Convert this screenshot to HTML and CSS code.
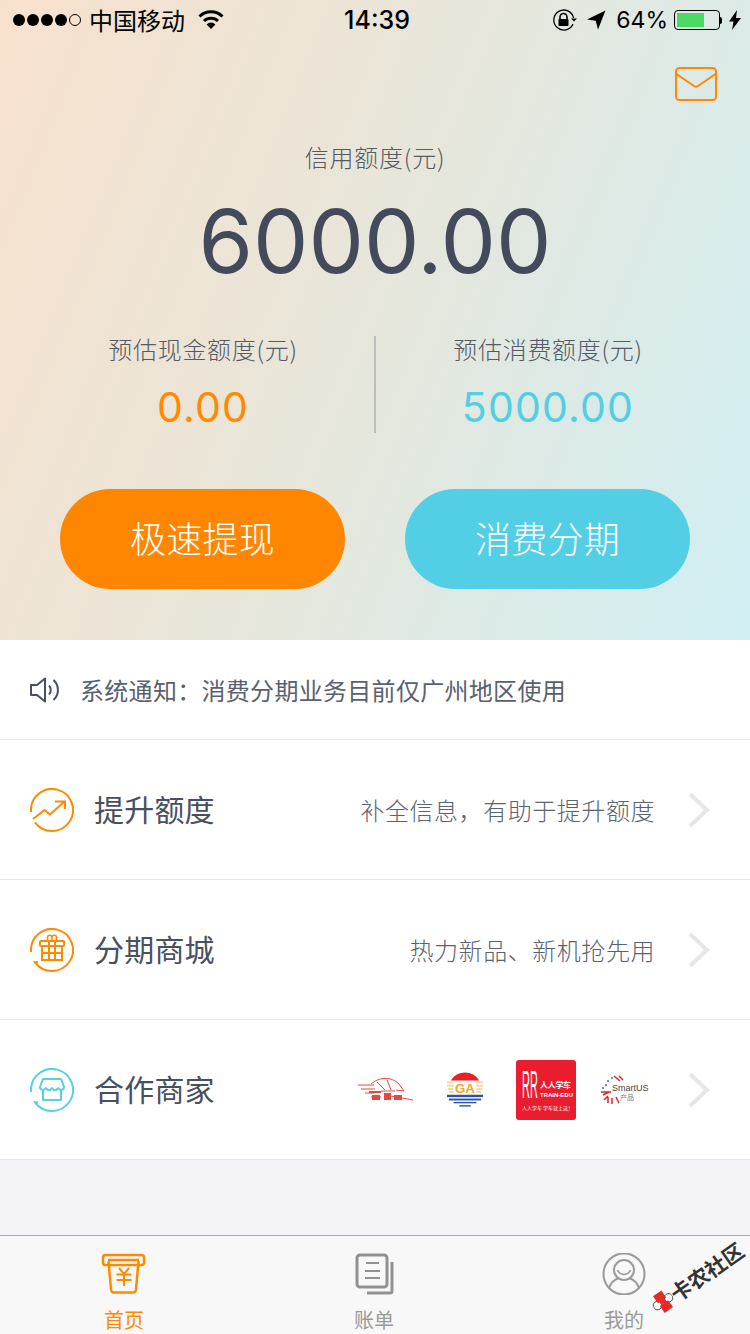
FILE: index.html
```html
<!DOCTYPE html>
<html lang="zh-CN">
<head>
<meta charset="utf-8">
<title>首页</title>
<link rel="stylesheet" href="styles.css">
</head>
<body>
<div class="page">
  <section class="hero">
    <div class="status">
      <div class="status-left">
        <span class="signal"><i></i><i></i><i></i><i></i><i class="off"></i></span>
        <span class="carrier">中国移动</span>
        <svg class="wifi" width="26" height="20" viewBox="0 0 26 20"><path d="M1.500 6.500a16.500 16.500 0 0 1 23 0" fill="none" stroke="#000" stroke-width="3"/><path d="M6 11a10 10 0 0 1 14 0" fill="none" stroke="#000" stroke-width="3"/><path d="M13 19l-4.400-4.600a6.200 6.200 0 0 1 8.800 0z" fill="#000"/></svg>
      </div>
      <div class="status-time">14:39</div>
      <div class="status-right">
        <svg class="lock" width="25" height="22" viewBox="0 0 25 22"><path d="M21 15a10 10 0 1 1 .6-6" fill="none" stroke="#000" stroke-width="1.300"/><path d="M19 9.500h6l-3 3z" fill="#000"/><path d="M8 10V8a3.500 3.500 0 0 1 7 0v2" fill="none" stroke="#000" stroke-width="1.600"/><rect x="6.500" y="10" width="10" height="7" rx="1" fill="#000"/></svg>
        <svg class="arrow" width="20" height="20" viewBox="0 0 20 20"><path d="M19.500 .500 1 9.500l8.700 1.200L12 19.500z" fill="#000"/></svg>
        <span class="pct">64%</span>
        <span class="battery"><span class="battery-level"></span></span>
        <span class="battery-tip"></span>
        <svg class="bolt" width="12" height="20" viewBox="0 0 12 20"><path d="M8 0 0 11.500h4.500L3 20l9-12H7z" fill="#000"/></svg>
      </div>
    </div>
    <div class="hero-top">
      <svg class="mail" width="44" height="36" viewBox="0 0 44 36"><rect x="2" y="2" width="40" height="32" rx="3.500" fill="none" stroke="#ff8a00" stroke-width="2"/><path d="M2.500 8 20 20a3.500 3.500 0 0 0 4 0L41.500 8" fill="none" stroke="#ff8a00" stroke-width="2"/></svg>
    </div>
    <div class="credit-label">信用额度(元)</div>
    <div class="credit-value">6000.00</div>
    <div class="stats">
      <div class="stat">
        <div class="stat-label">预估现金额度(元)</div>
        <div class="stat-value orange">0.00</div>
      </div>
      <div class="stat stat-right">
        <div class="stat-label">预估消费额度(元)</div>
        <div class="stat-value cyan">5000.00</div>
      </div>
    </div>
    <div class="actions">
      <a class="btn btn-orange">极速提现</a>
      <a class="btn btn-cyan">消费分期</a>
    </div>
  </section>

  <div class="notice">
    <svg class="speaker" width="30" height="28" viewBox="0 0 30 28"><path d="M1 9h6l8-6.500v23L7 19H1z" fill="none" stroke="#474f60" stroke-width="2" stroke-linejoin="round"/><path d="M19 9.500a6.500 6.500 0 0 1 0 9M23.500 4a13.500 13.500 0 0 1 0 20" fill="none" stroke="#474f60" stroke-width="2"/></svg>
    <span>系统通知：消费分期业务目前仅广州地区使用</span>
  </div>

  <div class="row">
    <svg class="row-icon" width="44" height="44" viewBox="0 0 44 44"><path d="M1.100 24A21 21 0 1 1 5 34.300" fill="none" stroke="#ff8a00" stroke-width="2"/><path d="M3 31l11.500-9 5.500 4.500L34 14M25 13.500h10v7.500" fill="none" stroke="#ff8a00" stroke-width="2"/></svg>
    <span class="row-title">提升额度</span>
    <span class="row-sub">补全信息，有助于提升额度</span>
    <svg class="chev" width="22" height="36" viewBox="0 0 22 36"><path d="M2 2l17 16L2 34" fill="none" stroke="#e6e6e6" stroke-width="4"/></svg>
  </div>
  <div class="row">
    <svg class="row-icon" width="44" height="44" viewBox="0 0 44 44"><path d="M1.100 24A21 21 0 1 1 5 34.300h3" fill="none" stroke="#ff8a00" stroke-width="2"/><g fill="none" stroke="#ff8a00" stroke-width="2"><rect x="10" y="13" width="24" height="5" rx="1"/><path d="M12 18v14h20V18M12 25h20M19 13v19M25 13v19"/><path d="M22 13h-4.500V9.500a2.200 2.200 0 0 1 4.500 0zM22 13h4.500V9.500a2.200 2.200 0 0 0-4.500 0z" stroke-width="1.600"/></g></svg>
    <span class="row-title">分期商城</span>
    <span class="row-sub">热力新品、新机抢先用</span>
    <svg class="chev" width="22" height="36" viewBox="0 0 22 36"><path d="M2 2l17 16L2 34" fill="none" stroke="#e6e6e6" stroke-width="4"/></svg>
  </div>
  <div class="row">
    <svg class="row-icon" width="44" height="44" viewBox="0 0 44 44"><path d="M1.100 24A21 21 0 1 1 5 34.300h3" fill="none" stroke="#56d0e3" stroke-width="2"/><g fill="none" stroke="#56d0e3" stroke-width="2" stroke-linejoin="round"><path d="M13 11h18l3 8c0 3-4 4-6 1-2 3-4 3-6 0-2 3-4 3-6 0-2 3-6 2-6-1z"/><path d="M13 22v10h18V22"/></g></svg>
    <span class="row-title">合作商家</span>
    <div class="logos">
      <svg class="logo logo-train" width="56" height="30" viewBox="0 0 56 30"><g fill="none" stroke="#e8473f" stroke-width="1"><path d="M1 10h16M4 14h14M8 18h9M14 9c8-7 20-8 28 0l5 7-8-1"/><path d="M20 7l8 8M30 5l4 10M14 22h10M24 16h14M28 20l28 5"/></g><g fill="#e8473f"><rect x="12" y="16" width="12" height="2"/><rect x="15" y="20" width="8" height="5"/><rect x="27" y="18" width="7" height="7"/><rect x="37" y="20" width="8" height="5"/></g></svg>
      <svg class="logo logo-ga" width="38" height="40" viewBox="0 0 40 40"><path d="M5 10a17.500 17.500 0 0 1 30 0z" fill="#e8202a"/><rect x="1" y="11" width="38" height="2" fill="#f7d79a"/><rect x="1" y="14.500" width="38" height="2" fill="#f7d79a"/><rect x="2" y="18" width="36" height="2" fill="#f7d79a"/><rect x="3" y="21" width="34" height="2" fill="#f7d79a"/><rect x="8" y="11" width="24" height="13" fill="#fff"/><rect x="1" y="25" width="38" height="2.500" fill="#2a55a5"/><rect x="3" y="29" width="34" height="2" fill="#2a55a5"/><rect x="8" y="32.500" width="24" height="1.500" fill="#2a55a5"/><rect x="14" y="36" width="12" height="1.500" fill="#2a55a5"/><text class="ga" x="20" y="23" text-anchor="middle">GA</text></svg>
      <div class="logo-red">
        <span class="rr">RR</span>
        <span class="red-name">人人学车</span>
        <span class="red-en">TRAIN-EDU</span>
        <span class="red-sub">人人学车 学车就上这！</span>
      </div>
      <svg class="logo logo-smart" width="50" height="30" viewBox="0 0 50 30"><g stroke="#d9262c" stroke-width="1.500" fill="none"><path d="M14 1l6 5M19 1l4 4M1 17h10M3 20l6-3M16 22l3 6M12 23v6M8 22v6M4 25l4-4"/></g><g fill="#3d6fb5"><circle cx="12" cy="3" r="1"/><circle cx="8" cy="6" r="1"/><circle cx="6" cy="10" r="1"/><circle cx="3" cy="13" r="1"/></g><text class="smart" x="12" y="16">SmartUS</text><text class="smart-cn" x="20" y="25">产品</text></svg>
    </div>
    <svg class="chev chev-logos" width="22" height="36" viewBox="0 0 22 36"><path d="M2 2l17 16L2 34" fill="none" stroke="#e6e6e6" stroke-width="4"/></svg>
  </div>

  <div class="spacer"></div>

  <nav class="tabbar">
    <div class="tab active">
      <svg width="46" height="42" viewBox="0 0 46 42"><rect x="2" y="2" width="41" height="10" rx="2.500" fill="none" stroke="#ff8a00" stroke-width="2.500"/><path d="M7 7h31" stroke="#ff8a00" stroke-width="2.500"/><path d="M7.500 8l2.500 28.500q.3 3 3 3h19q2.700 0 3-3L37.500 8" fill="none" stroke="#ff8a00" stroke-width="2.500"/><path d="M18 15l5 6 5-6M15.500 21.500h15M15.500 27h15M23 21v12" fill="none" stroke="#ff8a00" stroke-width="2"/></svg>
      <span>首页</span>
    </div>
    <div class="tab">
      <svg width="46" height="42" viewBox="0 0 46 42"><rect x="6" y="2" width="30" height="32" rx="3" fill="none" stroke="#919191" stroke-width="3"/><path d="M15 10h13M14 18h15M14 25h15" stroke="#919191" stroke-width="2"/><path d="M41 9v29q0 2-2 2H16" fill="none" stroke="#919191" stroke-width="3"/></svg>
      <span>账单</span>
    </div>
    <div class="tab">
      <svg width="46" height="42" viewBox="0 0 46 42"><circle cx="23" cy="21" r="20.500" fill="none" stroke="#9a9a9a" stroke-width="2"/><circle cx="23" cy="17" r="10" fill="none" stroke="#9a9a9a" stroke-width="2"/><path d="M16.500 17a7 7 0 0 0 13 0" fill="none" stroke="#9a9a9a" stroke-width="1.600"/><path d="M8 35c2-6 7-9 10-10M38 35c-2-6-7-9-10-10" fill="none" stroke="#9a9a9a" stroke-width="2"/></svg>
      <span>我的</span>
    </div>
  </nav>

  <div class="watermark">
    <svg width="22" height="22" viewBox="0 0 26 26"><circle cx="5" cy="13" r="5" fill="#fff" stroke="#333"/><circle cx="21" cy="13" r="5" fill="#fff" stroke="#333"/><rect x="7" y="1" width="12" height="10" fill="#e62a25"/><rect x="7" y="15" width="12" height="10" fill="#e62a25"/><path d="M10 11l6 4M16 11l-6 4" stroke="#e62a25" stroke-width="3"/></svg>
    <span>卡农社区</span>
  </div>
</div>
</body>
</html>
```

FILE: styles.css
```css
* { box-sizing: border-box; }
html, body { margin: 0; padding: 0; }
body {
  width: 750px;
  height: 1334px;
  overflow: hidden;
  font-family: "Noto Sans CJK SC", "Liberation Sans", sans-serif;
  background: #f4f4f8;
}
.page {
  position: relative;
  width: 750px;
  height: 1334px;
  display: flex;
  flex-direction: column;
}
.hero {
  height: 640px;
  flex: none;
  background: linear-gradient(112deg, #f7e1cd 0%, #e7e6da 48%, #d0eef3 100%);
  display: flex;
  flex-direction: column;
}
.status {
  height: 40px;
  display: flex;
  align-items: center;
  justify-content: space-between;
  padding: 0 9px 0 13px;
  color: #000;
}
.status-left, .status-right { display: flex; align-items: center; width: 260px; }
.status-right { justify-content: flex-end; }
.signal { display: flex; gap: 2px; margin-right: 8px; }
.signal i { width: 12px; height: 12px; border-radius: 50%; background: #000; display: block; }
.signal i.off { background: transparent; border: 1px solid #000; }
.carrier { font-size: 24px; line-height: 40px; margin-right: 13px; }
.status-time {
  font-family: Inter, "Liberation Sans", sans-serif;
  font-size: 25px;
  font-weight: 500;
}
.lock { margin-right: 9px; }
.arrow { margin-right: 10px; }
.pct { font-family: Inter, "Liberation Sans", sans-serif; font-size: 23px; margin-right: 6px; }
.battery {
  width: 46px;
  height: 20px;
  border: 1px solid #000;
  border-radius: 4px;
  padding: 2px;
  display: block;
}
.battery-level { display: block; width: 27px; height: 14px; background: #4cd964; }
.battery-tip { width: 2px; height: 7px; background: #000; border-radius: 0 2px 2px 0; margin-right: 7px; }
.hero-top { height: 72px; display: flex; justify-content: flex-end; padding: 26px 32px 0 0; }
.mail { display: block; }
.credit-label {
  margin-top: 27px;
  text-align: center;
  font-size: 24px;
  line-height: 36px;
  letter-spacing: .8px;
  color: #555a64;
  font-weight: 300;
}
.credit-value {
  text-align: center;
  font-family: Inter, "Liberation Sans", sans-serif;
  font-size: 88px;
  line-height: 112px;
  color: #434a5b;
  margin-top: 10px;
}
.stats {
  margin-top: 39px;
  height: 97px;
  display: flex;
}
.stat { width: 374px; padding-left: 32px; text-align: center; }
.stat-right { border-left: 2px solid #bcbebb; padding-left: 0; width: 346px; }
.stat-label { font-size: 24px; line-height: 30px; margin-top: -2px; color: #555a64; font-weight: 300; letter-spacing: .7px; }
.stat-value {
  font-family: Inter, "Liberation Sans", sans-serif;
  font-size: 41px;
  font-weight: 400;
  line-height: 50px;
  margin-top: 18px;
  letter-spacing: 1.200px;
}
.orange { color: #ff8a00; }
.cyan { color: #52cfe3; }
.actions {
  margin-top: 56px;
  padding: 0 60px;
  display: flex;
  justify-content: space-between;
}
.btn {
  width: 285px;
  height: 100px;
  border-radius: 50px;
  color: #fff;
  font-size: 36px;
  line-height: 97px;
  text-align: center;
  font-weight: 300;
  letter-spacing: .3px;
}
.btn-orange { background: #ff8600; }
.btn-cyan { background: #52cfe4; }
.notice {
  height: 100px;
  flex: none;
  background: #fff;
  border-bottom: 1px solid #e8e8e8;
  display: flex;
  align-items: center;
  padding-left: 30px;
  font-size: 24px;
  letter-spacing: .3px;
  color: #5a616e;
}
.speaker { margin-right: 20px; }
.row {
  height: 140px;
  flex: none;
  background: #fff;
  border-bottom: 1px solid #e8e8e8;
  display: flex;
  align-items: center;
  padding: 0 40px 0 30px;
}
.row-icon { margin-right: 20px; flex: none; }
.row-title { font-size: 30px; color: #474f60; flex: none; padding-bottom: 3px; letter-spacing: .2px; }
.row-sub { margin-left: auto; font-size: 24px; letter-spacing: .55px; color: #5c6370; font-weight: 300; padding-bottom: 1px; }
.chev { margin-left: 33px; flex: none; }
.chev-logos { margin-left: 38px; }
.logos {
  margin-left: auto;
  display: flex;
  align-items: center;
}
.logo { display: block; flex: none; }
.logo-ga { margin-left: 33px; }
.logo-smart { margin-left: 24px; }
.logo-red {
  position: relative;
  width: 60px;
  height: 60px;
  margin-left: 32px;
  background: #e91d2d;
  border-radius: 3px;
  color: #fff;
  flex: none;
  overflow: hidden;
}
.rr {
  position: absolute;
  left: 6px;
  top: 6px;
  font: 400 38px/38px "Liberation Sans", sans-serif;
  transform-origin: left top;
  transform: scaleX(.29);
}
.red-name { position: absolute; left: 24px; top: 20px; font-size: 8px; line-height: 10px; white-space: nowrap; font-weight: 700; letter-spacing: -.3px; }
.red-en { position: absolute; left: 24px; top: 32px; font: 700 6px/7px "Liberation Sans", sans-serif; white-space: nowrap; }
.red-sub { position: absolute; left: 6px; top: 44px; font-size: 5px; line-height: 8px; white-space: nowrap; }
.ga { font: 700 14px "Liberation Sans", sans-serif; fill: #f4a81c; }
.smart { font: 9px "Liberation Sans", sans-serif; fill: #444; }
.smart-cn { font: 7px "Noto Sans CJK SC", sans-serif; fill: #777; }
.spacer { flex: 1; background: #f4f4f8; }
.tabbar {
  height: 99px;
  flex: none;
  background: #f8f8f8;
  border-top: 1px solid #aaa;
  display: flex;
}
.tab {
  width: 250px;
  padding: 17px 2px 0 0;
  display: flex;
  flex-direction: column;
  align-items: center;
  font-size: 20px;
  line-height: 28px;
  color: #9a9a9a;
}
.tab svg { display: block; margin-bottom: 11px; }
.tab.active { color: #ff8a00; }
.watermark {
  position: absolute;
  left: 654px;
  top: 1293px;
  display: flex;
  align-items: center;
  transform: rotate(-35deg);
  transform-origin: left center;
  font-size: 21px;
  font-weight: 700;
  color: #333;
  white-space: nowrap;
  line-height: 30px;
}
```
